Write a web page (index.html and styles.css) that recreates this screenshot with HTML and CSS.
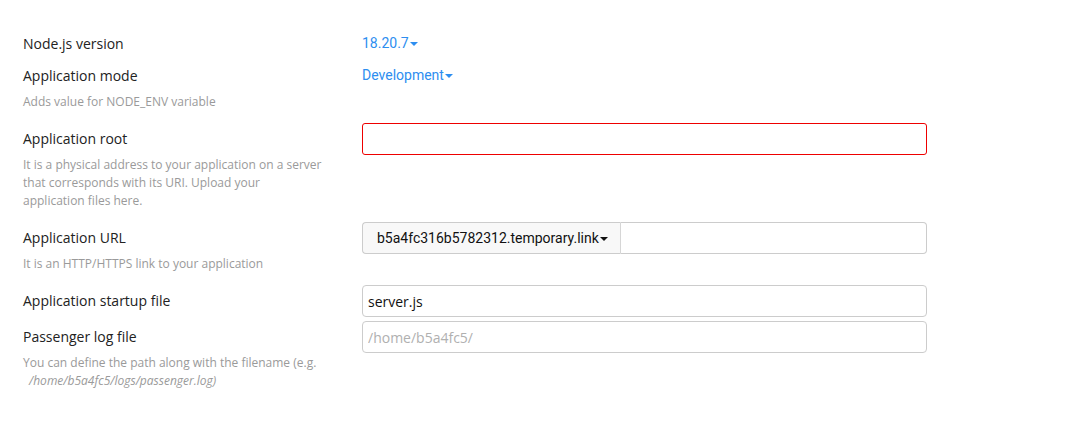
FILE: index.html
```html
<!DOCTYPE html>
<html lang="en">
<head>
<meta charset="utf-8">
<title>Node.js application setup</title>
<link rel="stylesheet" href="styles.css">
</head>
<body>
<div class="form">
  <div class="row row-short">
    <div class="label-col"><div class="label">Node.js version</div></div>
    <div class="control-col"><span class="dropdown">18.20.7<span class="caret"></span></span></div>
  </div>
  <div class="row">
    <div class="label-col">
      <div class="label">Application mode</div>
      <div class="help">Adds value for NODE_ENV variable</div>
    </div>
    <div class="control-col"><span class="dropdown">Development<span class="caret"></span></span></div>
  </div>
  <div class="row">
    <div class="label-col">
      <div class="label">Application root</div>
      <div class="help">It is a physical address to your application on a server that corresponds with its URI. Upload your application files here.</div>
    </div>
    <div class="control-col"><input class="input input-error" type="text"></div>
  </div>
  <div class="row">
    <div class="label-col">
      <div class="label">Application URL</div>
      <div class="help">It is an HTTP/HTTPS link to your application</div>
    </div>
    <div class="control-col">
      <div class="input-group">
        <span class="addon">b5a4fc316b5782312.temporary.link<span class="caret caret-dark"></span></span>
        <input class="input input-grouped" type="text">
      </div>
    </div>
  </div>
  <div class="row">
    <div class="label-col"><div class="label">Application startup file</div></div>
    <div class="control-col"><input class="input" type="text" value="server.js"></div>
  </div>
  <div class="row">
    <div class="label-col">
      <div class="label">Passenger log file</div>
      <div class="help">You can define the path along with the filename (e.g. <em class="path">/home/b5a4fc5/logs/passenger.log)</em></div>
    </div>
    <div class="control-col"><input class="input" type="text" placeholder="/home/b5a4fc5/"></div>
  </div>
</div>
</body>
</html>
```
FILE: styles.css
```css
html, body {
  margin: 0;
  padding: 0;
  background: #ffffff;
}

body {
  font-family: "Open Sans", "Liberation Sans", sans-serif;
  color: #222222;
}

.form {
  display: flex;
  flex-direction: column;
  gap: 4px;
  padding: 28px 0 0 23px;
}

.row {
  display: grid;
  grid-template-columns: 339px 565px;
  align-items: start;
}

.row-short {
  min-height: 28px;
}

.label-col {
  padding-top: 6px;
  width: 300px;
}

.label {
  font-size: 14px;
  line-height: 20px;
  color: #222222;
}

.help {
  margin-top: 7px;
  margin-bottom: 8px;
  font-size: 12px;
  line-height: 18px;
  color: #9a9a9a;
}

.path {
  display: inline-block;
  padding-left: 6px;
  font-style: italic;
}

.control-col {
  display: flex;
}

.dropdown {
  display: inline-flex;
  align-items: center;
  padding-top: 5px;
  font-family: Roboto, "Liberation Sans", sans-serif;
  font-size: 14px;
  line-height: 20px;
  color: #2d8ef0;
}

.caret {
  display: inline-block;
  width: 0;
  height: 0;
  margin-left: 1px;
  margin-top: 1px;
  border-top: 4px solid #2d8ef0;
  border-left: 4px solid transparent;
  border-right: 4px solid transparent;
}

.caret-dark {
  border-top-color: #111111;
}

.input {
  box-sizing: border-box;
  width: 565px;
  height: 32px;
  margin: 0;
  padding: 0 5px;
  border: 1px solid #cccccc;
  border-radius: 4px;
  background: #ffffff;
  font-family: "Open Sans", "Liberation Sans", sans-serif;
  font-size: 14px;
  color: #111111;
  outline: none;
}

.input::placeholder {
  color: #b0b0b0;
}

.input-error {
  border-color: #ee0000;
  border-radius: 3px;
}

.input-group {
  display: flex;
  width: 565px;
  height: 32px;
}

.addon {
  box-sizing: border-box;
  display: inline-flex;
  align-items: center;
  height: 32px;
  padding: 0 12px 0 14px;
  border: 1px solid #cccccc;
  border-right: 1px solid #d6d6d6;
  border-radius: 4px 0 0 4px;
  background: #f8f8f8;
  font-family: Roboto, "Liberation Sans", sans-serif;
  font-size: 14px;
  color: #111111;
  white-space: nowrap;
}

.input-grouped {
  flex: 1;
  width: auto;
  border-left: none;
  border-radius: 0 4px 4px 0;
}
```
